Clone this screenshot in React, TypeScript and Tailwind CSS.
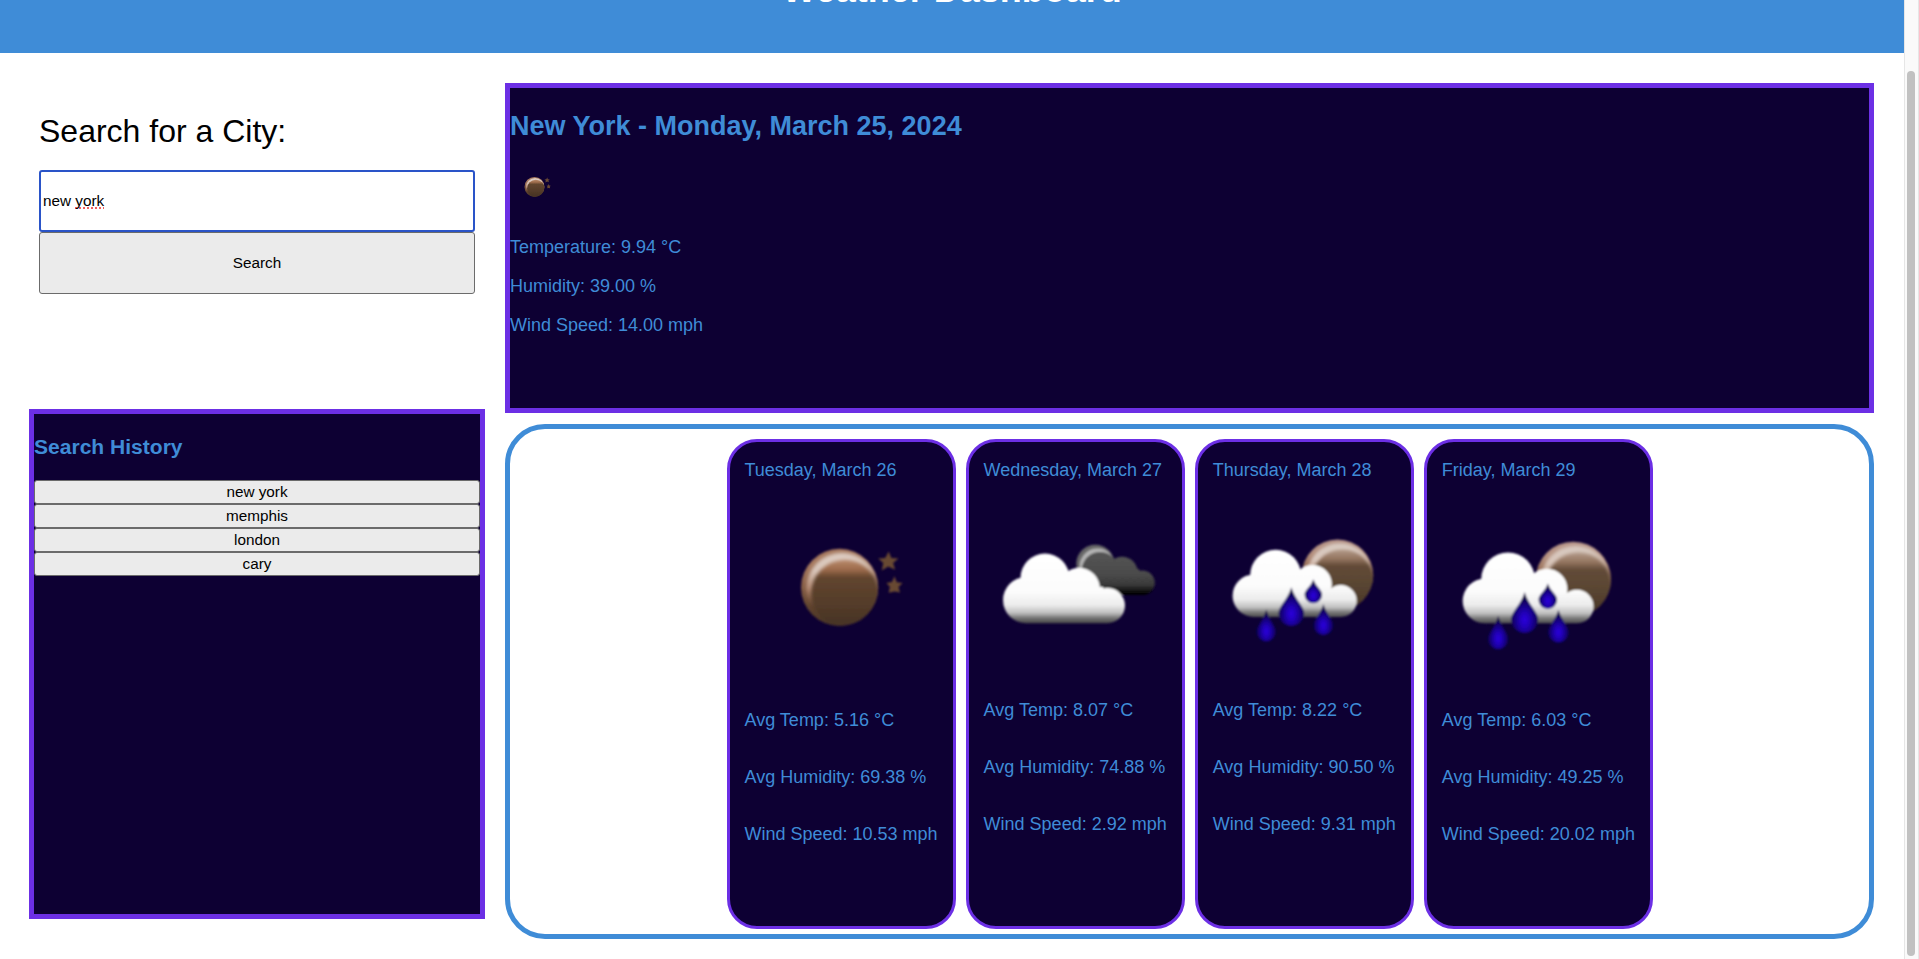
import React, { useId } from "react";

type IconKind = "clear" | "clouds" | "rain";

function Moon({ id, cx, cy, r, pale }: { id: string; cx: number; cy: number; r: number; pale?: boolean }) {
  const s = r / 20;
  return (
    <g>
      <defs>
        <linearGradient id={`${id}-rim`} x1="0" y1="0" x2="0" y2="1">
          <stop offset="0" stopColor={pale ? "#b8968a" : "#a5775c"} />
          <stop offset="0.2" stopColor={pale ? "#b5917f" : "#a77a60"} />
          <stop offset="0.45" stopColor="#8d634a" />
          <stop offset="0.75" stopColor="#5f432e" />
          <stop offset="1" stopColor="#4a3526" />
        </linearGradient>
        <linearGradient id={`${id}-face`} x1="0" y1="0" x2="0" y2="1">
          <stop offset="0" stopColor={pale ? "#b39a8a" : "#b98a6c"} />
          <stop offset="0.15" stopColor={pale ? "#94755f" : "#9c6a4a"} />
          <stop offset="0.26" stopColor={pale ? "#624b38" : "#61452f"} />
          <stop offset="0.6" stopColor={pale ? "#584431" : "#563d2a"} />
          <stop offset="1" stopColor="#453224" />
        </linearGradient>
        <linearGradient id={`${id}-shine`} x1="0" y1="0" x2="0" y2="1">
          <stop offset="0" stopColor={pale ? "#d8cac1" : "#dccbc1"} />
          <stop offset="0.25" stopColor="#dac8bd" />
          <stop offset="0.5" stopColor="#b98f78" />
          <stop offset="0.75" stopColor="#8a6044" stopOpacity="0" />
        </linearGradient>
        <filter id={`${id}-glow`} x="-10%" y="-10%" width="120%" height="120%">
          <feGaussianBlur stdDeviation="0.7" />
        </filter>
        <clipPath id={`${id}-clip`}>
          <circle cx={cx} cy={cy} r={r} />
        </clipPath>
      </defs>
      <circle cx={cx} cy={cy} r={r} fill={`url(#${id}-rim)`} />
      <g clipPath={`url(#${id}-clip)`}>
        <circle cx={cx + 1.2 * s} cy={cy + 0.4 * s} r={18.3 * s} fill={`url(#${id}-shine)`} filter={`url(#${id}-glow)`} />
        <circle cx={cx + 2.8 * s} cy={cy + 3.2 * s} r={17.6 * s} fill={`url(#${id}-face)`} filter={`url(#${id}-glow)`} />
      </g>
    </g>
  );
}

function Drop({ id, x, top, bottom, hw }: { id: string; x: number; top: number; bottom: number; hw: number }) {
  const mid = bottom - hw;
  const d = `M${x} ${top} C${x + hw * 0.25} ${top + (mid - top) * 0.45} ${x + hw} ${mid - hw * 0.55} ${x + hw} ${mid} A${hw} ${hw} 0 0 1 ${x - hw} ${mid} C${x - hw} ${mid - hw * 0.55} ${x - hw * 0.25} ${top + (mid - top) * 0.45} ${x} ${top}Z`;
  return <path d={d} fill={`url(#${id}-drop)`} />;
}

function WeatherIcon({ kind, className }: { kind: IconKind; className: string }) {
  const id = useId().replace(/[^a-zA-Z0-9]/g, "");
  return (
    <svg viewBox="0 0 100 100" className={className} aria-hidden="true">
      <defs>
        <filter id={`${id}-soft`} filterUnits="userSpaceOnUse" x="0" y="0" width="100" height="100">
          <feGaussianBlur stdDeviation="0.6" />
        </filter>
        <linearGradient id={`${id}-white`} gradientUnits="userSpaceOnUse" x1="0" x2="0" y1={kind === "rain" ? 26 : 29} y2={kind === "rain" ? 65 : 68}>
          <stop offset="0" stopColor="#ffffff" />
          <stop offset="0.55" stopColor="#fcfcfc" />
          <stop offset="0.74" stopColor="#ececec" />
          <stop offset="0.85" stopColor="#c0c0c0" />
          <stop offset="0.92" stopColor="#777777" />
          <stop offset="1" stopColor="#444444" />
        </linearGradient>
        <linearGradient id={`${id}-dark`} gradientUnits="userSpaceOnUse" x1="0" x2="0" y1="28" y2="52.5">
          <stop offset="0" stopColor="#565656" />
          <stop offset="0.55" stopColor="#4a4a4a" />
          <stop offset="0.78" stopColor="#383838" />
          <stop offset="0.92" stopColor="#0c0c0c" />
          <stop offset="1" stopColor="#000000" />
        </linearGradient>
        <linearGradient id={`${id}-glint`} x1="0.2" y1="0" x2="0.5" y2="0.9">
          <stop offset="0" stopColor="#b4b4b4" />
          <stop offset="0.45" stopColor="#b4b4b4" />
          <stop offset="1" stopColor="#505050" />
        </linearGradient>
        <radialGradient id={`${id}-drop`} cx="0.5" cy="0.68" r="0.55">
          <stop offset="0" stopColor="#2b00dc" />
          <stop offset="0.3" stopColor="#2200bb" />
          <stop offset="0.7" stopColor="#140078" />
          <stop offset="1" stopColor="#0c0044" />
        </radialGradient>
      </defs>
      <g filter={`url(#${id}-soft)`}>
        {kind === "clear" && (
          <>
            <Moon id={id} cx={49} cy={45.8} r={20} />
            <g fill="#684833">
              <path d="M74.4 27.2 75.8 30.6 79.5 30.8 76.7 33.2 77.8 36.7 74.2 35 70.8 37 71.6 33.2 69 30.8 72.6 30.6Z" />
              <path d="M77.4 40 78.6 43.1 81.6 43.5 79.5 45.6 80.3 48.4 77.5 47.9 74.4 48.5 75 45.5 73.2 43.5 76.1 43Z" />
            </g>
          </>
        )}
        {kind === "clouds" && (
          <>
            <circle cx="60.8" cy="35.4" r="10.4" fill="#686868" />
            <circle cx="62" cy="36.7" r="9.7" fill={`url(#${id}-glint)`} />
            <g fill={`url(#${id}-dark)`}>
              <circle cx="63.4" cy="38.9" r="10" />
              <circle cx="75.4" cy="40" r="8.5" />
              <circle cx="86.6" cy="45.8" r="6.7" />
              <path d="M56 38h28l4 4v10.5H58Z" />
            </g>
            <g fill={`url(#${id}-white)`}>
              <circle cx="33.3" cy="43.2" r="13.4" />
              <circle cx="23" cy="55.2" r="12.6" />
              <circle cx="51.9" cy="49" r="11.4" />
              <circle cx="67.4" cy="58.2" r="9.6" />
              <path d="M23 48h42l2.4 10v9.8H23Z" />
            </g>
          </>
        )}
        {kind === "rain" && (
          <>
            <Moon id={id} cx={68} cy={41.6} r={19.5} pale />
            <g fill={`url(#${id}-white)`}>
              <circle cx="34.2" cy="41.6" r="13.9" />
              <circle cx="22.3" cy="52.8" r="11.6" />
              <circle cx="54.3" cy="46.7" r="10.6" />
              <circle cx="69.8" cy="55.7" r="8.7" />
              <path d="M22.3 46H62l7.8 9v9.4H22.3Z" />
            </g>
            <Drop id={id} x={42.8} top={48.2} bottom={69.4} hw={7} />
            <Drop id={id} x={54.8} top={43.8} bottom={57} hw={4.8} />
            <Drop id={id} x={29.1} top={60.4} bottom={77.8} hw={5.3} />
            <Drop id={id} x={60.3} top={57.4} bottom={74.4} hw={5.4} />
          </>
        )}
      </g>
    </svg>
  );
}

const history = ["new york", "memphis", "london", "cary"];

const forecast: { day: string; icon: IconKind; wide: boolean; temp: string; humidity: string; wind: string }[] = [
  { day: "Tuesday, March 26", icon: "clear", wide: true, temp: "5.16", humidity: "69.38", wind: "10.53" },
  { day: "Wednesday, March 27", icon: "clouds", wide: false, temp: "8.07", humidity: "74.88", wind: "2.92" },
  { day: "Thursday, March 28", icon: "rain", wide: false, temp: "8.22", humidity: "90.50", wind: "9.31" },
  { day: "Friday, March 29", icon: "rain", wide: true, temp: "6.03", humidity: "49.25", wind: "20.02" },
];

export default function App() {
  return (
    <div className="flex h-[959px] w-[1919px] overflow-hidden bg-white font-['Liberation_Sans',Arial,sans-serif] text-[18px] leading-[21px] text-[#3f8cd7]">
      <div className="flex w-[1904px] shrink-0 flex-col">
        <header className="flex h-[53px] shrink-0 items-end justify-center overflow-hidden bg-[#3f8cd7] pb-[43px]">
          <h1 className="text-[36px] leading-[41px] font-bold text-white">Weather Dashboard</h1>
        </header>

        <div className="flex gap-5 pt-[30px] pl-[29px]">
          <aside className="flex w-[456px] flex-col">
            <form className="flex h-[326px] flex-col px-[10px] pt-[30px] text-black" onSubmit={(e) => e.preventDefault()}>
              <label className="mb-[20px] text-[32px] leading-[37px]">Search for a City:</label>
              <div className="flex h-[62px] items-center rounded-[3px] border-2 border-[#2a54c8] bg-white px-[2px] pb-[2px] text-[15.3px]">
                <span className="whitespace-pre">new </span>
                <span className="underline decoration-[#f0605f] decoration-dotted decoration-2 underline-offset-2 [text-decoration-skip-ink:none]">york</span>
              </div>
              <button className="h-[62px] rounded-[3px] border border-[#6b6b6b] bg-[#ebebeb] pb-[2px] text-[15.3px]">Search</button>
            </form>
            <section className="flex h-[510px] flex-col border-5 border-[#6c2fe5] bg-[#0d0033]">
              <h3 className="mt-[21px] mb-[21px] text-[21.06px] leading-[24px] font-bold">Search History</h3>
              {history.map((city) => (
                <button key={city} className="h-[24px] rounded-[3px] border border-[#6b6b6b] bg-[#ebebeb] text-[15.3px] leading-[18px] text-black">
                  {city}
                </button>
              ))}
            </section>
          </aside>

          <main className="flex w-[1369px] flex-col gap-[11px]">
            <section className="h-[330px] border-5 border-[#6c2fe5] bg-[#0d0033]">
              <h2 className="mt-[23px] text-[27px] leading-[31px] font-bold">New York - Monday, March 25, 2024</h2>
              <WeatherIcon kind="clear" className="mt-[22px] mb-[23px] size-[50px]" />
              <div className="flex flex-col gap-[18px]">
                <p>Temperature: 9.94 °C</p>
                <p>Humidity: 39.00 %</p>
                <p>Wind Speed: 14.00 mph</p>
              </div>
            </section>

            <section className="flex h-[515px] justify-center gap-[10px] rounded-[40px] border-5 border-[#3f8cd7] pt-[10px] pb-[5px] pl-[0.4px]">
              {forecast.map((f) => (
                <article
                  key={f.day}
                  className={`${f.wide ? "w-[229.1px]" : "w-[219.1px]"} shrink-0 rounded-[30px] border-3 border-[#6c2fe5] bg-[#0d0033] px-[15px] pt-[18px] whitespace-nowrap`}
                >
                  <p className="mb-[18px]">{f.day}</p>
                  <WeatherIcon kind={f.icon} className="mb-[18px] aspect-square w-full" />
                  <div className="flex flex-col gap-[36px]">
                    <p>Avg Temp: {f.temp} °C</p>
                    <p>Avg Humidity: {f.humidity} %</p>
                    <p>Wind Speed: {f.wind} mph</p>
                  </div>
                </article>
              ))}
            </section>
          </main>
        </div>
      </div>

      <div className="flex w-[15px] shrink-0 justify-center border-x border-[#e6e6e6] bg-[#fafafa] pt-[71px]">
        <div className="mr-px h-[885px] w-[8px] rounded-full bg-[#c1c1c1]" />
      </div>
    </div>
  );
}
